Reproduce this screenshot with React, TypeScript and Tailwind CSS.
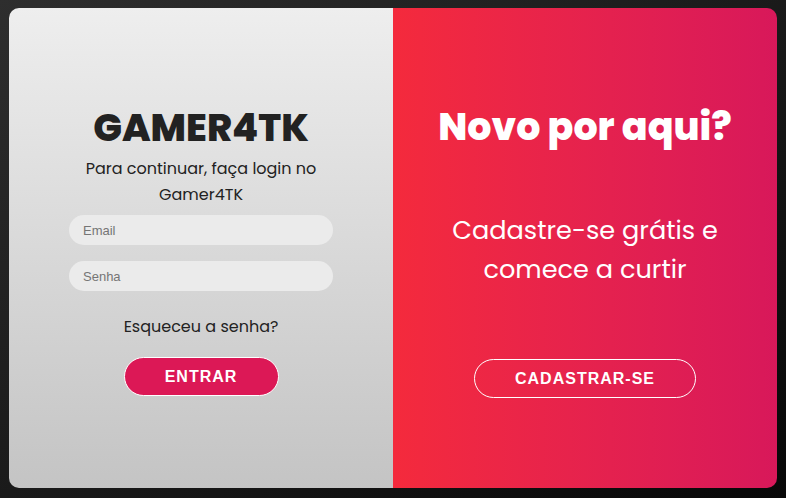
import React from "react";

export default function App() {
  const poppins = { fontFamily: "Poppins, Inter, 'Noto Sans', sans-serif" };
  return (
    <div className="w-[786px] h-[498px] bg-linear-to-br from-[#2e2e2e] to-[#080808] pt-[8px] pl-[9px]">
      <div className="w-[768px] h-[480px] rounded-[10px] overflow-hidden flex">
        <div
          className="w-[384px] h-full bg-linear-to-b from-[#eeeeee] to-[#c4c4c4] flex flex-col items-center pt-[100px] text-[#222222]"
          style={poppins}
        >
          <h1 className="text-[38px] leading-[40px] font-extrabold">GAMER4TK</h1>
          <p className="mt-[8px] text-[16px] leading-[26px] text-center">
            Para continuar, faça login no
            <br />
            Gamer4TK
          </p>
          <input
            placeholder="Email"
            className="mt-[7px] w-[264px] h-[30px] rounded-full bg-[#ebebeb] pl-[14px] text-[13px] outline-none placeholder:text-[#757575]"
            style={{ fontFamily: "'Liberation Sans', Arial, sans-serif" }}
          />
          <input
            placeholder="Senha"
            type="password"
            className="mt-[16px] w-[264px] h-[30px] rounded-full bg-[#ebebeb] pl-[14px] text-[13px] outline-none placeholder:text-[#757575]"
            style={{ fontFamily: "'Liberation Sans', Arial, sans-serif" }}
          />
          <p className="mt-[24px] text-[16px] leading-[24px]">Esqueceu a senha?</p>
          <button
            className="mt-[18px] w-[155px] h-[39px] rounded-full bg-[#dc1856] border border-white text-white text-[16px] font-bold tracking-[1px]"
            style={{ fontFamily: "'Liberation Sans', Arial, sans-serif" }}
          >
            ENTRAR
          </button>
        </div>
        <div
          className="flex-1 h-full bg-linear-to-r from-[#f42a3c] to-[#d8185a] flex flex-col items-center pt-[99px] text-white"
          style={poppins}
        >
          <h2 className="text-[38px] leading-[40px] font-extrabold">Novo por aqui?</h2>
          <p className="mt-[64px] text-[25.6px] leading-[39px] text-center">
            Cadastre-se grátis e
            <br />
            comece a curtir
          </p>
          <button
            className="mt-[70px] w-[222px] h-[39px] rounded-full bg-transparent border border-white text-white text-[16px] font-bold tracking-[1px]"
            style={{ fontFamily: "'Liberation Sans', Arial, sans-serif" }}
          >
            CADASTRAR-SE
          </button>
        </div>
      </div>
    </div>
  );
}
